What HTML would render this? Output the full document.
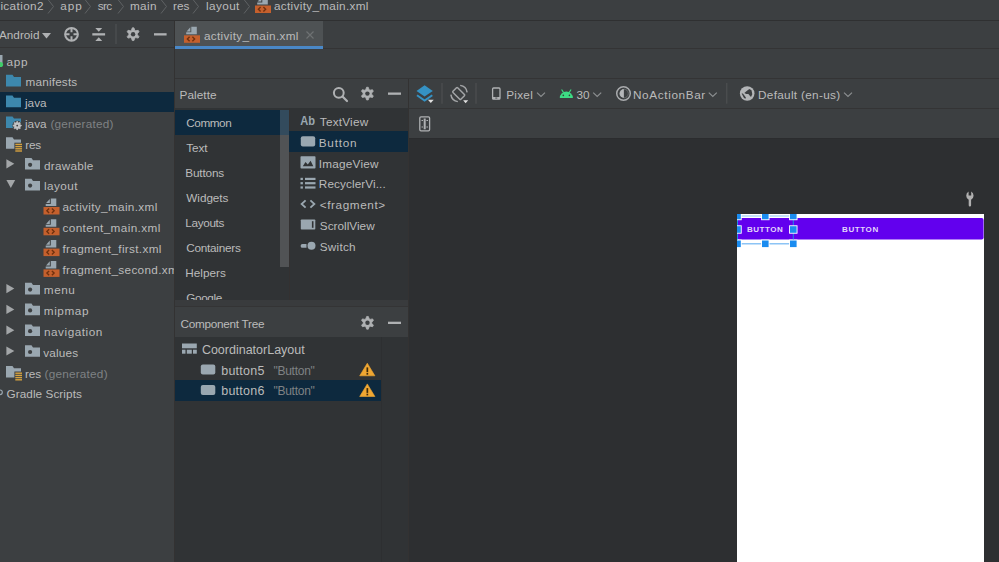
<!DOCTYPE html>
<html><head><meta charset="utf-8">
<style>
*{margin:0;padding:0;box-sizing:border-box}
html,body{width:999px;height:562px;overflow:hidden;background:#3c3f41}
body{position:relative;font-family:"Liberation Sans",sans-serif;font-size:12px;color:#bbbbbb}
.a{position:absolute}
.t{position:absolute;white-space:pre;line-height:40px;font-family:"Liberation Sans",sans-serif}
svg{position:absolute;left:0;top:0;overflow:hidden}
</style></head><body>
<!-- breadcrumb -->
<div class="a" style="left:0;top:0;width:999px;height:20px;background:#3c3f41"></div>
<div class="a" style="left:0;top:19.5px;width:999px;height:1.5px;background:#2f3031"></div>
<!-- left toolbar -->
<div class="a" style="left:0;top:21px;width:174px;height:26px;background:#3c3f41"></div>
<div class="a" style="left:0;top:47px;width:174px;height:1px;background:#343435"></div>
<!-- left tree -->
<div class="a" style="left:0;top:48px;width:174px;height:514px;background:#3c3f41"></div>
<div class="a" style="left:0;top:91.5px;width:174px;height:20.8px;background:#0d293e"></div>
<div class="a" style="left:174px;top:21px;width:1px;height:541px;background:#333232"></div>
<!-- tabs -->
<div class="a" style="left:175px;top:21px;width:824px;height:27px;background:#3c3f41"></div>
<div class="a" style="left:175px;top:48px;width:824px;height:1px;background:#343435"></div>
<div class="a" style="left:175px;top:21px;width:147.5px;height:25px;background:#4e5254"></div>
<div class="a" style="left:175px;top:46px;width:147.5px;height:3px;background:#4a88c7"></div>
<!-- editor toolbar -->
<div class="a" style="left:175px;top:49px;width:824px;height:29px;background:#3c3f41"></div>
<div class="a" style="left:175px;top:78px;width:824px;height:1px;background:#343435"></div>
<!-- palette -->
<div class="a" style="left:175px;top:79px;width:233px;height:29px;background:#3c3f41"></div>
<div class="a" style="left:175px;top:108px;width:233px;height:192px;background:#303335"></div>
<div class="a" style="left:175px;top:110px;width:113.5px;height:24.5px;background:#0d293e"></div>

<div class="a" style="left:280px;top:110px;width:8.5px;height:157px;background:rgba(255,255,255,0.16)"></div>
<div class="a" style="left:288.5px;top:108px;width:1px;height:192px;background:#333131"></div>
<div class="a" style="left:289px;top:131.2px;width:119px;height:20.8px;background:#0d293e"></div>
<div class="a" style="left:175px;top:300px;width:233px;height:6px;background:#393b3d"></div>
<div class="a" style="left:175px;top:306px;width:233px;height:1px;background:#343435"></div>
<div class="a" style="left:175px;top:307px;width:233px;height:30px;background:#3c3f41"></div>
<div class="a" style="left:175px;top:337px;width:233px;height:225px;background:#303335"></div>
<div class="a" style="left:175px;top:380px;width:206px;height:20.5px;background:#0d293e"></div>
<div class="a" style="left:381px;top:337px;width:1px;height:225px;background:#2d2f31"></div>
<div class="a" style="left:382px;top:337px;width:26px;height:225px;background:#303335"></div>
<!-- design -->
<div class="a" style="left:408px;top:79px;width:1px;height:483px;background:#333232"></div>
<div class="a" style="left:409px;top:79px;width:590px;height:29px;background:#3c3f41"></div>
<div class="a" style="left:409px;top:108px;width:590px;height:1px;background:#343435"></div>
<div class="a" style="left:409px;top:109px;width:590px;height:29px;background:#3c3f41"></div>
<div class="a" style="left:409px;top:138px;width:590px;height:1.5px;background:#2b2c2e"></div>
<div class="a" style="left:409px;top:139px;width:590px;height:423px;background:#2d2f31"></div>
<div class="a" style="left:736.8px;top:214px;width:246.8px;height:348px;background:#ffffff"></div>
<svg width="999" height="562" viewBox="0 0 999 562">
<path d="M48,-0.5 L53.5,6.5 L48,13.5" fill="none" stroke="#5f6264" stroke-width="1"/><path d="M85,-0.5 L90.5,6.5 L85,13.5" fill="none" stroke="#5f6264" stroke-width="1"/><path d="M118,-0.5 L123.5,6.5 L118,13.5" fill="none" stroke="#5f6264" stroke-width="1"/><path d="M161,-0.5 L166.5,6.5 L161,13.5" fill="none" stroke="#5f6264" stroke-width="1"/><path d="M193,-0.5 L198.5,6.5 L193,13.5" fill="none" stroke="#5f6264" stroke-width="1"/><path d="M244,-0.5 L249.5,6.5 L244,13.5" fill="none" stroke="#5f6264" stroke-width="1"/><g transform="translate(255,-3) scale(1.0)"><path d="M7.3,0 H12.8 V7.5 H2.2 V5.5 H7.3 Z" fill="#9aa7b0"/><path d="M2.6,4.6 L6.3,0.4 V4.6 Z" fill="#9aa7b0"/><rect x="0" y="8.5" width="16" height="7.5" fill="#c5602d"/><path d="M5.6,10 L3.4,12.2 L5.6,14.4 M8.4,10 L10.6,12.2 L8.4,14.4" fill="none" stroke="#70310f" stroke-width="1.4"/></g><path d="M42,33 L51,33 L46.5,38.5 Z" fill="#afb1b3"/><circle cx="71.5" cy="34.3" r="6.4" fill="none" stroke="#afb1b3" stroke-width="2"/><path d="M71.5,27.8 V32.3 M71.5,36.3 V40.8 M65,34.3 H69.5 M73.5,34.3 H78" stroke="#afb1b3" stroke-width="2"/><path d="M95.3,28 H102.2 L98.75,31.8 Z M95.3,41 H102.2 L98.75,37.2 Z" fill="#afb1b3"/><rect x="92.3" y="33.2" width="12.8" height="2.3" fill="#afb1b3"/><rect x="115.5" y="24" width="1" height="20" fill="#515557"/><path d="M132.26,27.85 L133.94,27.85 L134.75,30.23 L135.72,30.79 L138.18,30.30 L139.01,31.75 L137.36,33.64 L137.36,34.76 L139.01,36.65 L138.18,38.10 L135.72,37.61 L134.75,38.17 L133.94,40.55 L132.26,40.55 L131.45,38.17 L130.48,37.61 L128.02,38.10 L127.19,36.65 L128.84,34.76 L128.84,33.64 L127.19,31.75 L128.02,30.30 L130.48,30.79 L131.45,30.23 Z" fill="#afb1b3" stroke="#afb1b3" stroke-width="0.8" stroke-linejoin="round"/><circle cx="133.1" cy="34.2" r="2.2" fill="#3c3f41"/><rect x="154" y="33.2" width="12.6" height="2.3" fill="#afb1b3"/><g transform="translate(184,26.8) scale(1.0)"><path d="M7.3,0 H12.8 V7.5 H2.2 V5.5 H7.3 Z" fill="#9aa7b0"/><path d="M2.6,4.6 L6.3,0.4 V4.6 Z" fill="#9aa7b0"/><rect x="0" y="8.5" width="16" height="7.5" fill="#c5602d"/><path d="M5.6,10 L3.4,12.2 L5.6,14.4 M8.4,10 L10.6,12.2 L8.4,14.4" fill="none" stroke="#70310f" stroke-width="1.4"/></g><path d="M306.5,31.5 L313.5,38.5 M313.5,31.5 L306.5,38.5" stroke="#6e7173" stroke-width="1.2"/><rect x="-6" y="55" width="8.5" height="8" fill="#9aa7b0"/><circle cx="0.5" cy="64.5" r="2.6" fill="#3fcc6a"/><path d="M6,74.8 H12.5 L14,77.0 H21 V86.39999999999999 H6 Z" fill="#3d88ad"/><path d="M6,95.6 H12.5 L14,97.8 H21 V107.19999999999999 H6 Z" fill="#3d88ad"/><path d="M6,116.4 H12.5 L14,118.60000000000001 H21 V128.0 H6 Z" fill="#3d88ad"/><circle cx="17.2" cy="125.60000000000001" r="4.8" fill="#3c3f41"/><path d="M16.80,121.52 L17.60,121.52 L18.04,122.82 L18.57,123.04 L19.80,122.43 L20.37,123.00 L19.76,124.23 L19.98,124.76 L21.28,125.20 L21.28,126.00 L19.98,126.44 L19.76,126.97 L20.37,128.20 L19.80,128.77 L18.57,128.16 L18.04,128.38 L17.60,129.68 L16.80,129.68 L16.36,128.38 L15.83,128.16 L14.60,128.77 L14.03,128.20 L14.64,126.97 L14.42,126.44 L13.12,126.00 L13.12,125.20 L14.42,124.76 L14.64,124.23 L14.03,123.00 L14.60,122.43 L15.83,123.04 L16.36,122.82 Z" fill="#c0c3c5" stroke="#c0c3c5" stroke-width="0.8" stroke-linejoin="round"/><circle cx="17.2" cy="125.60000000000001" r="0.9" fill="#3c3f41"/><path d="M6,137.2 H12.5 L14,139.39999999999998 H21 V148.79999999999998 H6 Z" fill="#9aa7b0"/><rect x="14.4" y="142.7" width="8.6" height="10.6" fill="#3c3f41"/><g fill="#d6a23f"><rect x="15.3" y="143.7" width="6.7" height="1.4"/><rect x="15.3" y="145.89999999999998" width="6.7" height="1.4"/><rect x="15.3" y="148.1" width="6.7" height="1.4"/><rect x="15.3" y="150.29999999999998" width="6.7" height="1.4"/></g><path d="M6.4,159.2 L14.3,163.8 L6.4,168.4 Z" fill="#a3a6a8"/><path d="M25,158.0 H31.5 L33,160.2 H40 V169.6 H25 Z" fill="#9aa7b0"/><circle cx="30.1" cy="164.8" r="2.1" fill="#3c3f41"/><path d="M6.4,284.0 L14.3,288.6 L6.4,293.2 Z" fill="#a3a6a8"/><path d="M25,282.8 H31.5 L33,285.0 H40 V294.40000000000003 H25 Z" fill="#9aa7b0"/><circle cx="30.1" cy="289.6" r="2.1" fill="#3c3f41"/><path d="M6.4,304.8 L14.3,309.40000000000003 L6.4,314.0 Z" fill="#a3a6a8"/><path d="M25,303.6 H31.5 L33,305.8 H40 V315.20000000000005 H25 Z" fill="#9aa7b0"/><circle cx="30.1" cy="310.40000000000003" r="2.1" fill="#3c3f41"/><path d="M6.4,325.6 L14.3,330.20000000000005 L6.4,334.8 Z" fill="#a3a6a8"/><path d="M25,324.40000000000003 H31.5 L33,326.6 H40 V336.00000000000006 H25 Z" fill="#9aa7b0"/><circle cx="30.1" cy="331.20000000000005" r="2.1" fill="#3c3f41"/><path d="M6.4,346.4 L14.3,351.0 L6.4,355.59999999999997 Z" fill="#a3a6a8"/><path d="M25,345.2 H31.5 L33,347.4 H40 V356.8 H25 Z" fill="#9aa7b0"/><circle cx="30.1" cy="352.0" r="2.1" fill="#3c3f41"/><path d="M6.4,180.0 L15.2,180.0 L10.8,188.10000000000002 Z" fill="#a3a6a8"/><path d="M25,178.8 H31.5 L33,181.0 H40 V190.4 H25 Z" fill="#9aa7b0"/><circle cx="30.1" cy="185.60000000000002" r="2.1" fill="#3c3f41"/><g transform="translate(43.5,198.5) scale(1.0)"><path d="M7.3,0 H12.8 V7.5 H2.2 V5.5 H7.3 Z" fill="#9aa7b0"/><path d="M2.6,4.6 L6.3,0.4 V4.6 Z" fill="#9aa7b0"/><rect x="0" y="8.5" width="16" height="7.5" fill="#c5602d"/><path d="M5.6,10 L3.4,12.2 L5.6,14.4 M8.4,10 L10.6,12.2 L8.4,14.4" fill="none" stroke="#70310f" stroke-width="1.4"/></g><g transform="translate(43.5,219.3) scale(1.0)"><path d="M7.3,0 H12.8 V7.5 H2.2 V5.5 H7.3 Z" fill="#9aa7b0"/><path d="M2.6,4.6 L6.3,0.4 V4.6 Z" fill="#9aa7b0"/><rect x="0" y="8.5" width="16" height="7.5" fill="#c5602d"/><path d="M5.6,10 L3.4,12.2 L5.6,14.4 M8.4,10 L10.6,12.2 L8.4,14.4" fill="none" stroke="#70310f" stroke-width="1.4"/></g><g transform="translate(43.5,240.10000000000002) scale(1.0)"><path d="M7.3,0 H12.8 V7.5 H2.2 V5.5 H7.3 Z" fill="#9aa7b0"/><path d="M2.6,4.6 L6.3,0.4 V4.6 Z" fill="#9aa7b0"/><rect x="0" y="8.5" width="16" height="7.5" fill="#c5602d"/><path d="M5.6,10 L3.4,12.2 L5.6,14.4 M8.4,10 L10.6,12.2 L8.4,14.4" fill="none" stroke="#70310f" stroke-width="1.4"/></g><g transform="translate(43.5,260.9) scale(1.0)"><path d="M7.3,0 H12.8 V7.5 H2.2 V5.5 H7.3 Z" fill="#9aa7b0"/><path d="M2.6,4.6 L6.3,0.4 V4.6 Z" fill="#9aa7b0"/><rect x="0" y="8.5" width="16" height="7.5" fill="#c5602d"/><path d="M5.6,10 L3.4,12.2 L5.6,14.4 M8.4,10 L10.6,12.2 L8.4,14.4" fill="none" stroke="#70310f" stroke-width="1.4"/></g><path d="M6,366.0 H12.5 L14,368.2 H21 V377.6 H6 Z" fill="#9aa7b0"/><rect x="14.4" y="371.5" width="8.6" height="10.6" fill="#3c3f41"/><g fill="#d6a23f"><rect x="15.3" y="372.5" width="6.7" height="1.4"/><rect x="15.3" y="374.7" width="6.7" height="1.4"/><rect x="15.3" y="376.9" width="6.7" height="1.4"/><rect x="15.3" y="379.1" width="6.7" height="1.4"/></g><circle cx="0" cy="392.3" r="2.3" fill="none" stroke="#9aa7b0" stroke-width="1.2"/><circle cx="338.8" cy="92.8" r="4.9" fill="none" stroke="#afb1b3" stroke-width="2"/><path d="M342.5,96.5 L347,101" stroke="#afb1b3" stroke-width="2.2" stroke-linecap="round"/><path d="M366.56,87.25 L368.24,87.25 L369.05,89.63 L370.02,90.19 L372.48,89.70 L373.31,91.15 L371.66,93.04 L371.66,94.16 L373.31,96.05 L372.48,97.50 L370.02,97.01 L369.05,97.57 L368.24,99.95 L366.56,99.95 L365.75,97.57 L364.78,97.01 L362.32,97.50 L361.49,96.05 L363.14,94.16 L363.14,93.04 L361.49,91.15 L362.32,89.70 L364.78,90.19 L365.75,89.63 Z" fill="#afb1b3" stroke="#afb1b3" stroke-width="0.8" stroke-linejoin="round"/><circle cx="367.4" cy="93.6" r="2.2" fill="#3c3f41"/><rect x="388" y="92.5" width="13" height="2.3" fill="#afb1b3"/><text x="300.2" y="125.30000000000001" font-family="Liberation Sans" font-size="12.5" font-weight="bold" fill="#9aa7b0" textLength="14.8" lengthAdjust="spacingAndGlyphs">Ab</text><rect x="300.8" y="136.2" width="14.4" height="10.3" rx="2" fill="#9aa7b0"/><rect x="300.5" y="156.2" width="15" height="12.4" rx="0.8" fill="#9aa7b0"/><path d="M302.8,166.2 L305.5,162 L307.8,164.4 L310.6,160.8 L313.3,166.2 Z" fill="#303335"/><rect x="300.5" y="177.8" width="2.4" height="2.2" fill="#9aa7b0"/><rect x="305" y="177.8" width="10.5" height="2.2" fill="#9aa7b0"/><rect x="300.5" y="182.1" width="2.4" height="2.2" fill="#9aa7b0"/><rect x="305" y="182.1" width="10.5" height="2.2" fill="#9aa7b0"/><rect x="300.5" y="186.4" width="2.4" height="2.2" fill="#9aa7b0"/><rect x="305" y="186.4" width="10.5" height="2.2" fill="#9aa7b0"/><path d="M305.6,200.3 L301.6,204 L305.6,207.7 M310.4,200.3 L314.4,204 L310.4,207.7" fill="none" stroke="#9aa7b0" stroke-width="1.8"/><rect x="300.8" y="219.5" width="14.5" height="10" rx="0.8" fill="#9aa7b0"/><rect x="311.9" y="221.2" width="1.6" height="6.6" fill="#303335"/><path d="M302.5,244 H306.5 V247.8 H302.5 A1.9,1.9 0 0 1 302.5,244 Z" fill="#9aa7b0"/><circle cx="311.5" cy="245.8" r="4" fill="#9aa7b0"/><path d="M366.66,316.45 L368.34,316.45 L369.15,318.83 L370.12,319.39 L372.58,318.90 L373.41,320.35 L371.76,322.24 L371.76,323.36 L373.41,325.25 L372.58,326.70 L370.12,326.21 L369.15,326.77 L368.34,329.15 L366.66,329.15 L365.85,326.77 L364.88,326.21 L362.42,326.70 L361.59,325.25 L363.24,323.36 L363.24,322.24 L361.59,320.35 L362.42,318.90 L364.88,319.39 L365.85,318.83 Z" fill="#afb1b3" stroke="#afb1b3" stroke-width="0.8" stroke-linejoin="round"/><circle cx="367.5" cy="322.8" r="2.2" fill="#3c3f41"/><rect x="388" y="321.7" width="13" height="2.3" fill="#afb1b3"/><rect x="182" y="343.5" width="14.8" height="4.8" fill="#9aa7b0"/><rect x="182" y="349.7" width="3.5" height="4" fill="#9aa7b0"/><rect x="186.8" y="349.7" width="5" height="4" fill="#9aa7b0"/><rect x="193" y="349.7" width="3.8" height="4" fill="#9aa7b0"/><rect x="200.8" y="364.4" width="14.5" height="10.2" rx="2" fill="#9aa7b0"/><rect x="200.8" y="384.9" width="14.5" height="10.2" rx="2" fill="#9aa7b0"/><path d="M367.3,363.2 L374.9,375.8 H359.7 Z" fill="#f0a732" stroke="#f0a732" stroke-width="0.6" stroke-linejoin="round"/><rect x="366.5" y="367.4" width="1.7" height="4.8" fill="#3c2a0a"/><rect x="366.5" y="373.0" width="1.7" height="1.7" fill="#3c2a0a"/><path d="M367.3,383.9 L374.9,396.5 H359.7 Z" fill="#f0a732" stroke="#f0a732" stroke-width="0.6" stroke-linejoin="round"/><rect x="366.5" y="388.09999999999997" width="1.7" height="4.8" fill="#3c2a0a"/><rect x="366.5" y="393.7" width="1.7" height="1.7" fill="#3c2a0a"/><path d="M424.6,85.2 L432.8,91 L424.6,96.6 L416.5,91 Z" fill="#3592c4"/><path d="M417,95.2 L424.6,100.6 L432.3,95.2" fill="none" stroke="#3592c4" stroke-width="2"/><path d="M427.9,99.8 H433.7 L430.8,102.9 Z" fill="#e0e0e0"/><rect x="441.5" y="83" width="1" height="20.7" fill="#505355"/><g transform="rotate(-45 458.7 93.5)"><rect x="455.4" y="87.9" width="6.6" height="11.2" rx="0.8" fill="none" stroke="#a3a5a7" stroke-width="1.5"/></g><path d="M460.14,85.38 A8.2,8.2 0 0 1 467.12,92.36" fill="none" stroke="#a3a5a7" stroke-width="1.5"/><path d="M450.88,94.64 A8.2,8.2 0 0 0 457.86,101.62" fill="none" stroke="#a3a5a7" stroke-width="1.5"/><path d="M463.1,100.2 H468.2 L465.6,103.2 Z" fill="#e0e0e0"/><rect x="475.5" y="83" width="1" height="20.7" fill="#505355"/><rect x="492.6" y="88" width="7.4" height="11.2" rx="1" fill="none" stroke="#afb1b3" stroke-width="1.3"/><rect x="492.6" y="97" width="7.4" height="2.2" fill="#afb1b3"/><rect x="495.3" y="97.6" width="2" height="0.9" fill="#3c3f41"/><path d="M537,92.6 L541,96.4 L545,92.6" fill="none" stroke="#8c8f91" stroke-width="1.2"/><path d="M593.2,92.6 L597.2,96.4 L601.2,92.6" fill="none" stroke="#8c8f91" stroke-width="1.2"/><path d="M708.8,92.6 L712.8,96.4 L716.8,92.6" fill="none" stroke="#8c8f91" stroke-width="1.2"/><path d="M844,92.6 L848,96.4 L852,92.6" fill="none" stroke="#8c8f91" stroke-width="1.2"/><path d="M559.8,97.9 A6.55,6.3 0 0 1 572.9,97.9 Z" fill="#3ddc84"/><path d="M561.6,89.5 L563.6,92.6 M571.1,89.5 L569.1,92.6" stroke="#3ddc84" stroke-width="1.1"/><circle cx="563.3" cy="95.4" r="0.8" fill="#2c4a3a"/><circle cx="569.4" cy="95.4" r="0.8" fill="#2c4a3a"/><circle cx="623.5" cy="93.5" r="6.8" fill="none" stroke="#a9abad" stroke-width="1.5"/><path d="M623.9,89.1 A4.4,4.4 0 0 0 623.9,97.9 Z" fill="#b5b7b9"/><path d="M623.9,89.1 A4.4,4.4 0 0 1 623.9,97.9" fill="none" stroke="#6f7274" stroke-width="0.8"/><rect x="726.3" y="83" width="1" height="20.7" fill="#505355"/><circle cx="747.2" cy="93.5" r="7.3" fill="#b3b5b7"/><path d="M744.3,92.9 L747.3,90.6 L749.4,88.9 L751.5,90.2 L752.3,94.3 L751,96.9 L749.6,95.4 L748.4,93.9 L746.2,94.1 Z M741.6,93.4 L742.9,93.5 L745.9,97.5 L745.4,98.8 L744,98.1 Z" fill="#3c3f41"/><rect x="419.8" y="116.8" width="9.8" height="14" rx="1.2" fill="none" stroke="#afb1b3" stroke-width="1.3"/><path d="M424.7,118.5 V129.3" stroke="#afb1b3" stroke-width="2"/><path d="M421.5,120.5 H423 M426.4,120.5 H428 M421.5,127 H423 M426.4,127 H428" stroke="#afb1b3" stroke-width="1"/><path d="M968.6,191.6 A4.6,4.6 0 0 0 968.7,199.7 V205.2 A1.2,1.2 0 0 0 971.1,205.2 V199.7 A4.6,4.6 0 0 0 971.2,191.6 V195.6 H968.6 Z" fill="#b0b0b0"/>
<svg x="737" y="214" width="247" height="348" viewBox="737 214 247 348" overflow="hidden"><rect x="737" y="218" width="246.6" height="21.4" rx="2" fill="#6200ee"/><rect x="737" y="215.5" width="56.3" height="1" fill="#8cc4f5"/><rect x="737" y="243" width="56.3" height="1.5" fill="#8cc4f5"/><rect x="737" y="214" width="1" height="30" fill="#1e88e5"/><rect x="792.8" y="214" width="1" height="30" fill="#1e88e5"/><rect x="733.3" y="211.8" width="8.4" height="8.4" fill="#fff"/><rect x="734.2" y="212.7" width="6.6" height="6.6" fill="#1a8cf0"/><rect x="733.3" y="225.3" width="8.4" height="8.4" fill="#fff"/><rect x="734.2" y="226.2" width="6.6" height="6.6" fill="#1a8cf0"/><rect x="733.3" y="239.60000000000002" width="8.4" height="8.4" fill="#fff"/><rect x="734.2" y="240.5" width="6.6" height="6.6" fill="#1a8cf0"/><rect x="761.0999999999999" y="211.8" width="8.4" height="8.4" fill="#fff"/><rect x="762.0" y="212.7" width="6.6" height="6.6" fill="#1a8cf0"/><rect x="761.0999999999999" y="239.60000000000002" width="8.4" height="8.4" fill="#fff"/><rect x="762.0" y="240.5" width="6.6" height="6.6" fill="#1a8cf0"/><rect x="789.0999999999999" y="211.8" width="8.4" height="8.4" fill="#fff"/><rect x="790.0" y="212.7" width="6.6" height="6.6" fill="#1a8cf0"/><rect x="789.0999999999999" y="225.3" width="8.4" height="8.4" fill="#fff"/><rect x="790.0" y="226.2" width="6.6" height="6.6" fill="#1a8cf0"/><rect x="789.0999999999999" y="239.60000000000002" width="8.4" height="8.4" fill="#fff"/><rect x="790.0" y="240.5" width="6.6" height="6.6" fill="#1a8cf0"/></svg>
</svg>
<div class="t" style="left:0.40px;top:-14.00px;font-size:11.75px;color:#bbbbbb;font-weight:normal;letter-spacing:0.371px">ication2</div><div class="t" style="left:60.20px;top:-14.00px;font-size:11.75px;color:#bbbbbb;font-weight:normal;letter-spacing:1.000px">app</div><div class="t" style="left:97.70px;top:-14.00px;font-size:11.75px;color:#bbbbbb;font-weight:normal;letter-spacing:-0.650px">src</div><div class="t" style="left:130.00px;top:-14.00px;font-size:11.75px;color:#bbbbbb;font-weight:normal;letter-spacing:0.333px">main</div><div class="t" style="left:173.00px;top:-14.00px;font-size:11.75px;color:#bbbbbb;font-weight:normal;letter-spacing:0.000px">res</div><div class="t" style="left:206.00px;top:-14.00px;font-size:11.75px;color:#bbbbbb;font-weight:normal;letter-spacing:0.400px">layout</div><div class="t" style="left:274.00px;top:-14.00px;font-size:11.75px;color:#bbbbbb;font-weight:normal;letter-spacing:0.312px">activity_main.xml</div><div class="t" style="left:-1.00px;top:15.30px;font-size:11.75px;color:#bbbbbb;font-weight:normal;letter-spacing:0.000px">Android</div><div class="t" style="left:204.00px;top:15.60px;font-size:11.75px;color:#bbbbbb;font-weight:normal;letter-spacing:0.312px">activity_main.xml</div><div class="a" style="left:0px;top:48px;width:174px;height:514px;overflow:hidden"><div class="t" style="left:6.50px;top:-6.50px;font-size:11.75px;color:#bbbbbb;font-weight:normal;letter-spacing:0.750px">app</div></div><div class="a" style="left:0px;top:48px;width:174px;height:514px;overflow:hidden"><div class="t" style="left:25.60px;top:14.30px;font-size:11.75px;color:#bbbbbb;font-weight:normal;letter-spacing:0.163px">manifests</div></div><div class="a" style="left:0px;top:48px;width:174px;height:514px;overflow:hidden"><div class="t" style="left:25.00px;top:35.10px;font-size:11.75px;color:#bbbbbb;font-weight:normal;letter-spacing:0.000px">java</div></div><div class="a" style="left:0px;top:48px;width:174px;height:514px;overflow:hidden"><div class="t" style="left:25.00px;top:55.90px;font-size:11.75px;color:#bbbbbb;font-weight:normal;letter-spacing:0.000px">java</div></div><div class="a" style="left:0px;top:48px;width:174px;height:514px;overflow:hidden"><div class="t" style="left:50.50px;top:55.90px;font-size:11.75px;color:#7f8284;font-weight:normal;letter-spacing:0.210px">(generated)</div></div><div class="a" style="left:0px;top:48px;width:174px;height:514px;overflow:hidden"><div class="t" style="left:25.30px;top:76.70px;font-size:11.75px;color:#bbbbbb;font-weight:normal;letter-spacing:-0.250px">res</div></div><div class="a" style="left:0px;top:48px;width:174px;height:514px;overflow:hidden"><div class="t" style="left:44.00px;top:97.50px;font-size:11.75px;color:#bbbbbb;font-weight:normal;letter-spacing:0.229px">drawable</div></div><div class="a" style="left:0px;top:48px;width:174px;height:514px;overflow:hidden"><div class="t" style="left:44.00px;top:118.30px;font-size:11.75px;color:#bbbbbb;font-weight:normal;letter-spacing:0.440px">layout</div></div><div class="a" style="left:0px;top:48px;width:174px;height:514px;overflow:hidden"><div class="t" style="left:62.50px;top:139.10px;font-size:11.75px;color:#bbbbbb;font-weight:normal;letter-spacing:0.331px">activity_main.xml</div></div><div class="a" style="left:0px;top:48px;width:174px;height:514px;overflow:hidden"><div class="t" style="left:62.50px;top:159.90px;font-size:11.75px;color:#bbbbbb;font-weight:normal;letter-spacing:0.380px">content_main.xml</div></div><div class="a" style="left:0px;top:48px;width:174px;height:514px;overflow:hidden"><div class="t" style="left:62.50px;top:180.70px;font-size:11.75px;color:#bbbbbb;font-weight:normal;letter-spacing:0.324px">fragment_first.xml</div></div><div class="a" style="left:0px;top:48px;width:174px;height:514px;overflow:hidden"><div class="t" style="left:62.50px;top:201.50px;font-size:11.75px;color:#bbbbbb;font-weight:normal;letter-spacing:0.324px">fragment_second.xml</div></div><div class="a" style="left:0px;top:48px;width:174px;height:514px;overflow:hidden"><div class="t" style="left:43.80px;top:222.30px;font-size:11.75px;color:#bbbbbb;font-weight:normal;letter-spacing:0.567px">menu</div></div><div class="a" style="left:0px;top:48px;width:174px;height:514px;overflow:hidden"><div class="t" style="left:43.80px;top:243.10px;font-size:11.75px;color:#bbbbbb;font-weight:normal;letter-spacing:0.580px">mipmap</div></div><div class="a" style="left:0px;top:48px;width:174px;height:514px;overflow:hidden"><div class="t" style="left:44.00px;top:263.90px;font-size:11.75px;color:#bbbbbb;font-weight:normal;letter-spacing:0.522px">navigation</div></div><div class="a" style="left:0px;top:48px;width:174px;height:514px;overflow:hidden"><div class="t" style="left:43.30px;top:284.70px;font-size:11.75px;color:#bbbbbb;font-weight:normal;letter-spacing:0.160px">values</div></div><div class="a" style="left:0px;top:48px;width:174px;height:514px;overflow:hidden"><div class="t" style="left:25.00px;top:305.50px;font-size:11.75px;color:#bbbbbb;font-weight:normal;letter-spacing:-0.100px">res</div></div><div class="a" style="left:0px;top:48px;width:174px;height:514px;overflow:hidden"><div class="t" style="left:44.50px;top:305.50px;font-size:11.75px;color:#7f8284;font-weight:normal;letter-spacing:0.230px">(generated)</div></div><div class="a" style="left:0px;top:48px;width:174px;height:514px;overflow:hidden"><div class="t" style="left:6.50px;top:326.30px;font-size:11.75px;color:#bbbbbb;font-weight:normal;letter-spacing:0.069px">Gradle Scripts</div></div><div class="t" style="left:179.50px;top:74.80px;font-size:11.75px;color:#bbbbbb;font-weight:normal;letter-spacing:0.083px">Palette</div><div class="a" style="left:175px;top:108px;width:105px;height:192px;overflow:hidden"><div class="t" style="left:11.30px;top:-5.20px;font-size:11.75px;color:#bbbbbb;font-weight:normal;letter-spacing:-0.460px">Common</div></div><div class="a" style="left:175px;top:108px;width:105px;height:192px;overflow:hidden"><div class="t" style="left:11.30px;top:19.85px;font-size:11.75px;color:#bbbbbb;font-weight:normal;letter-spacing:-0.100px">Text</div></div><div class="a" style="left:175px;top:108px;width:105px;height:192px;overflow:hidden"><div class="t" style="left:10.30px;top:44.90px;font-size:11.75px;color:#bbbbbb;font-weight:normal;letter-spacing:-0.150px">Buttons</div></div><div class="a" style="left:175px;top:108px;width:105px;height:192px;overflow:hidden"><div class="t" style="left:11.30px;top:69.95px;font-size:11.75px;color:#bbbbbb;font-weight:normal;letter-spacing:-0.050px">Widgets</div></div><div class="a" style="left:175px;top:108px;width:105px;height:192px;overflow:hidden"><div class="t" style="left:10.30px;top:95.00px;font-size:11.75px;color:#bbbbbb;font-weight:normal;letter-spacing:-0.350px">Layouts</div></div><div class="a" style="left:175px;top:108px;width:105px;height:192px;overflow:hidden"><div class="t" style="left:11.30px;top:120.05px;font-size:11.75px;color:#bbbbbb;font-weight:normal;letter-spacing:-0.256px">Containers</div></div><div class="a" style="left:175px;top:108px;width:105px;height:192px;overflow:hidden"><div class="t" style="left:10.30px;top:145.10px;font-size:11.75px;color:#bbbbbb;font-weight:normal;letter-spacing:0.000px">Helpers</div></div><div class="a" style="left:175px;top:108px;width:105px;height:192px;overflow:hidden"><div class="t" style="left:11.30px;top:170.15px;font-size:11.75px;color:#bbbbbb;font-weight:normal;letter-spacing:-0.400px">Google</div></div><div class="t" style="left:319.80px;top:101.90px;font-size:11.75px;color:#bbbbbb;font-weight:normal;letter-spacing:0.229px">TextView</div><div class="t" style="left:318.80px;top:122.70px;font-size:11.75px;color:#bbbbbb;font-weight:normal;letter-spacing:0.740px">Button</div><div class="t" style="left:318.80px;top:143.50px;font-size:11.75px;color:#bbbbbb;font-weight:normal;letter-spacing:0.225px">ImageView</div><div class="t" style="left:318.80px;top:164.30px;font-size:11.75px;color:#bbbbbb;font-weight:normal;letter-spacing:0.100px">RecyclerVi...</div><div class="t" style="left:319.80px;top:185.10px;font-size:11.75px;color:#bbbbbb;font-weight:normal;letter-spacing:0.578px">&lt;fragment&gt;</div><div class="t" style="left:319.80px;top:205.90px;font-size:11.75px;color:#bbbbbb;font-weight:normal;letter-spacing:0.022px">ScrollView</div><div class="t" style="left:319.80px;top:226.70px;font-size:11.75px;color:#bbbbbb;font-weight:normal;letter-spacing:0.240px">Switch</div><div class="t" style="left:180.50px;top:304.00px;font-size:11.75px;color:#bbbbbb;font-weight:normal;letter-spacing:-0.269px">Component Tree</div><div class="t" style="left:201.90px;top:329.90px;font-size:12.5px;color:#bbbbbb;font-weight:normal;letter-spacing:-0.000px">CoordinatorLayout</div><div class="t" style="left:221.20px;top:350.50px;font-size:12.5px;color:#bbbbbb;font-weight:normal;letter-spacing:0.250px">button5</div><div class="t" style="left:273.40px;top:350.50px;font-size:12px;color:#7f8284;font-weight:normal;letter-spacing:-0.257px">"Button"</div><div class="t" style="left:221.20px;top:371.00px;font-size:12.5px;color:#bbbbbb;font-weight:normal;letter-spacing:0.250px">button6</div><div class="t" style="left:273.40px;top:371.00px;font-size:12px;color:#7f8284;font-weight:normal;letter-spacing:-0.257px">"Button"</div><div class="t" style="left:506.20px;top:74.80px;font-size:11.75px;color:#bbbbbb;font-weight:normal;letter-spacing:0.275px">Pixel</div><div class="t" style="left:576.60px;top:74.80px;font-size:11.75px;color:#bbbbbb;font-weight:normal;letter-spacing:-0.200px">30</div><div class="t" style="left:633.00px;top:74.80px;font-size:11.75px;color:#bbbbbb;font-weight:normal;letter-spacing:0.630px">NoActionBar</div><div class="t" style="left:758.00px;top:74.80px;font-size:11.75px;color:#bbbbbb;font-weight:normal;letter-spacing:0.314px">Default (en-us)</div><div class="t" style="left:746.90px;top:209.70px;font-size:8px;color:#e2d6fa;font-weight:bold;letter-spacing:0.520px">BUTTON</div><div class="t" style="left:842.00px;top:209.70px;font-size:8px;color:#e2d6fa;font-weight:bold;letter-spacing:0.600px">BUTTON</div>
</body></html>
